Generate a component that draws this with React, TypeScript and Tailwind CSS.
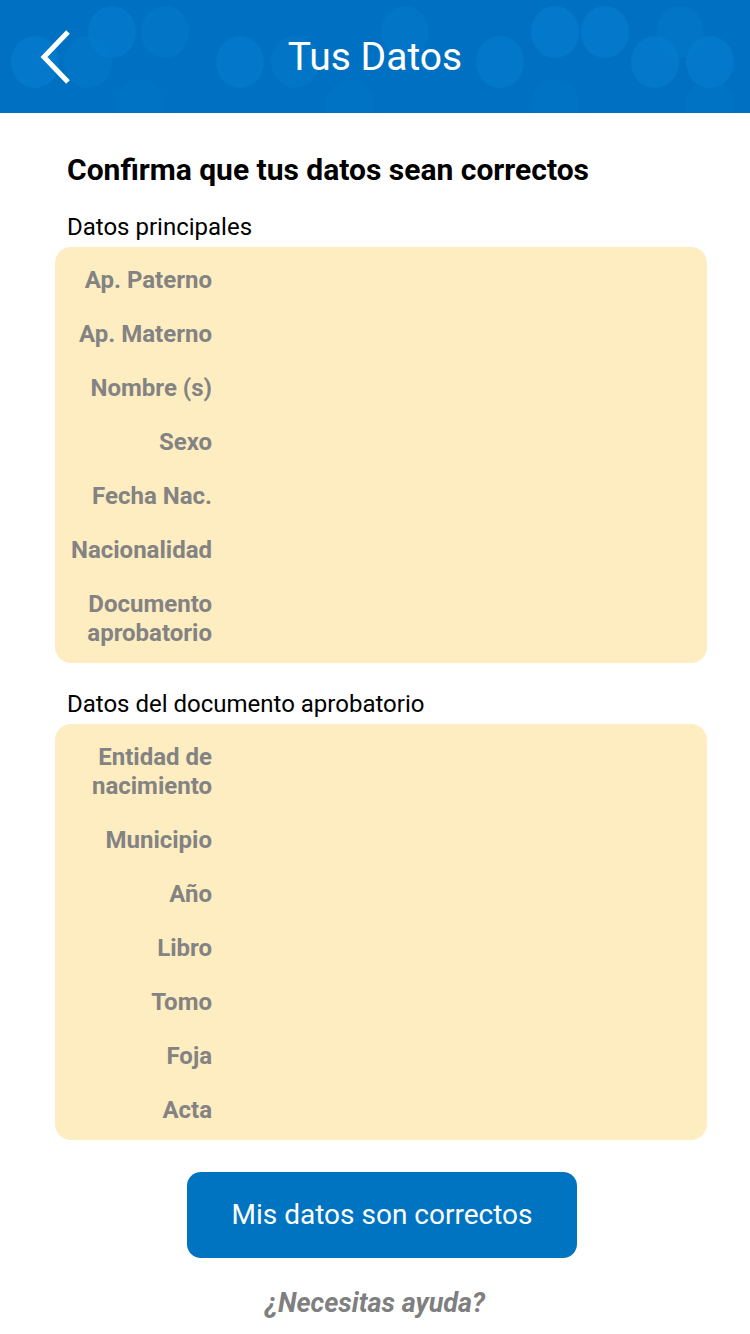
const principales = ["Ap. Paterno", "Ap. Materno", "Nombre (s)", "Sexo", "Fecha Nac.", "Nacionalidad", "Documento aprobatorio"];
const documento = ["Entidad de nacimiento", "Municipio", "Año", "Libro", "Tomo", "Foja", "Acta"];

const dots = [
  [112, 32, 0.5], [165, 32, 0.4], [405, 32, 0.3], [555, 32, 0.6], [605, 32, 0.6], [680, 32, 0.3],
  [35, 62, 0.6], [88, 62, 0.4], [240, 62, 0.5], [295, 62, 0.3], [500, 62, 0.5], [655, 62, 0.6], [710, 62, 0.6],
  [140, 105, 0.2], [350, 105, 0.2], [555, 105, 0.2], [710, 105, 0.2],
];

const Card = ({ labels }: { labels: string[] }) => (
  <div className="ml-[55px] mr-[43px] rounded-2xl bg-[#feedc1] pt-[19px] pb-[15px]">
    <div className="flex flex-col gap-[25px]">
      {labels.map((l) => (
        <div key={l} className="flex">
          <div className="w-[157px] shrink-0 pl-2 text-right text-[24px] font-bold leading-[29px] text-[#838383]">{l}</div>
        </div>
      ))}
    </div>
  </div>
);

export default function App() {
  return (
    <div className="min-h-screen bg-white font-['Roboto',sans-serif]">
      <header className="relative flex h-[113px] items-center justify-center overflow-hidden bg-[#0071c2]">
        <svg className="absolute inset-0" width="750" height="113" viewBox="0 0 750 113">
          {dots.map(([x, y, o], i) => (
            <ellipse key={i} cx={x} cy={y} rx="24" ry="26" fill="#067dd0" opacity={o} />
          ))}
        </svg>
        <svg className="absolute left-[38px] top-[30px]" width="34" height="54" viewBox="0 0 34 54">
          <path d="M30 2 L6 27 L30 52" fill="none" stroke="white" strokeWidth="5" />
        </svg>
        <h1 className="relative mt-[2px] text-[39px] font-normal text-white">Tus Datos</h1>
      </header>

      <main className="pt-[37px]">
        <h2 className="px-[67px] text-[30px] font-bold leading-[40px] text-black">Confirma que tus datos sean correctos</h2>
        <p className="mt-[22px] px-[67px] text-[24px] leading-[30px] text-black">Datos principales</p>
        <div className="mt-[5px]">
          <Card labels={principales} />
        </div>
        <p className="mt-[26px] px-[67px] text-[24px] leading-[30px] text-black">Datos del documento aprobatorio</p>
        <div className="mt-[5px]">
          <Card labels={documento} />
        </div>
        <div className="mt-[32px] flex pl-[187px]">
          <button className="h-[86px] w-[390px] rounded-[14px] bg-[#0074c1] text-[28px] text-white">Mis datos son correctos</button>
        </div>
        <p className="mt-[29px] text-center text-[27px] font-bold italic leading-[32px] text-[#7f7f7f]">¿Necesitas ayuda?</p>
      </main>
    </div>
  );
}
